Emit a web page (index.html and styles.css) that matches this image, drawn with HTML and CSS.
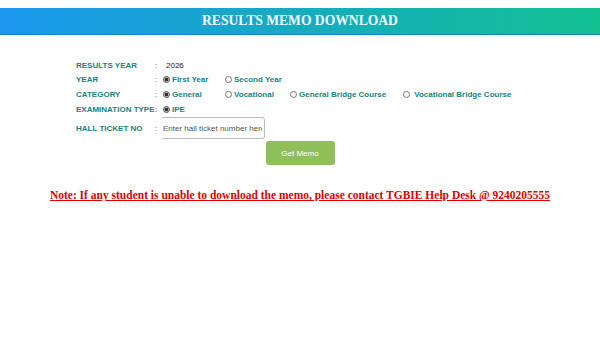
FILE: index.html
```html
<!DOCTYPE html>
<html lang="en">
<head>
  <meta charset="UTF-8" />
  <meta name="viewport" content="width=device-width, initial-scale=1.0"/>
  <title>Results Memo Download</title>
  <link rel="stylesheet" href="styles.css">
</head>
<body>
  <div class="header">
    <h1>RESULTS MEMO DOWNLOAD</h1>
  </div>

  <form id="memoForm" class="memo-form">
    <table class="form-table">
      <colgroup>
        <col class="c-label">
        <col class="c-colon">
        <col class="c-opt1">
        <col class="c-opt2">
        <col class="c-opt3">
        <col class="c-opt4">
      </colgroup>
      <tr>
        <td class="label">RESULTS YEAR</td>
        <td class="colon">:</td>
        <td class="value" colspan="4">2026</td>
      </tr>
      <tr>
        <td class="label">YEAR</td>
        <td class="colon">:</td>
        <td><label class="opt"><input type="radio" name="year" checked> First Year</label></td>
        <td colspan="4"><label class="opt"><input type="radio" name="year"> Second Year</label></td>
      </tr>
      <tr>
        <td class="label">CATEGORY</td>
        <td class="colon">:</td>
        <td><label class="opt"><input type="radio" name="category" checked> General</label></td>
        <td><label class="opt"><input type="radio" name="category"> Vocational</label></td>
        <td><label class="opt"><input type="radio" name="category"> General Bridge Course</label></td>
        <td><label class="opt"><input type="radio" name="category"> &nbsp;Vocational Bridge Course</label></td>
      </tr>
      <tr>
        <td class="label">EXAMINATION TYPE</td>
        <td class="colon">:</td>
        <td colspan="4"><label class="opt"><input type="radio" name="exam" checked> IPE</label></td>
      </tr>
      <tr class="ticket-row">
        <td class="label">HALL TICKET NO</td>
        <td class="colon">:</td>
        <td colspan="4"><input type="text" id="hallticket" class="ticket-input" placeholder="Enter hall ticket number here"></td>
      </tr>
    </table>

    <div class="actions">
      <button type="button" id="getMemo">Get Memo</button>
    </div>
  </form>

  <p class="note">Note: If any student is unable to download the memo, please contact TGBIE Help Desk @ 9240205555</p>
</body>
</html>
```

FILE: styles.css
```css
body {
  font-family: "Liberation Sans", Arial, sans-serif;
  margin: 0;
  background: white;
}

.header {
  margin-top: 8px;
  height: 26px;
  background: linear-gradient(to right, #1b97ee, #12c091);
  border-bottom: 1px solid #1784c4;
  display: flex;
  align-items: center;
  justify-content: center;
}

.header h1 {
  margin: 0;
  font-family: "Liberation Serif", "Times New Roman", serif;
  font-size: 13.6px;
  font-weight: bold;
  color: #eef8ff;
}

.memo-form {
  margin-top: 23px;
}

.form-table {
  width: 448px;
  margin-left: 76px;
  border-collapse: collapse;
  table-layout: fixed;
  font-size: 8px;
}

.c-label { width: 79px; }
.c-colon { width: 7px; }
.c-opt1 { width: 62px; }
.c-opt2 { width: 65px; }
.c-opt3 { width: 113px; }
.c-opt4 { width: 122px; }

.form-table td {
  padding: 0;
  height: 14.6px;
  white-space: nowrap;
  overflow: hidden;
}

.label {
  font-weight: bold;
  color: #1a827e;
}

.colon {
  color: #333;
  text-align: left;
}

.value {
  padding-left: 4px !important;
  color: #222;
}

.opt {
  display: flex;
  align-items: center;
  gap: 2px;
  font-weight: bold;
  color: #1a827e;
}

.opt input {
  appearance: none;
  width: 7px;
  height: 7px;
  margin: 0 0 0 1px;
  border: 1px solid #777;
  border-radius: 50%;
  background: white;
}

.opt input:checked {
  background: radial-gradient(circle, #333 0 1.5px, #aaa 2px, #fff 2.8px);
  border-color: #555;
}

.ticket-row td {
  height: 24px;
}

.ticket-input {
  width: 105px;
  height: 22px;
  box-sizing: border-box;
  margin: 0 0 0 -2px;
  padding: 0 2px;
  border: 1px solid #b9b9c4;
  border-radius: 3px;
  font-family: "Liberation Sans", Arial, sans-serif;
  font-size: 8px;
  color: #333;
}

.ticket-input::placeholder {
  color: #555;
}

.actions {
  display: flex;
  justify-content: center;
  margin-top: 1px;
}

button {
  width: 69px;
  height: 24px;
  background-color: #8ebf5a;
  color: white;
  border: none;
  border-radius: 3px;
  font-family: "Liberation Sans", Arial, sans-serif;
  font-size: 8px;
  cursor: pointer;
}

.note {
  margin: 24px 0 0;
  text-align: center;
  font-family: "Liberation Serif", "Times New Roman", serif;
  font-size: 11.5px;
  font-weight: bold;
  color: #e00000;
  text-decoration: underline;
}
```
